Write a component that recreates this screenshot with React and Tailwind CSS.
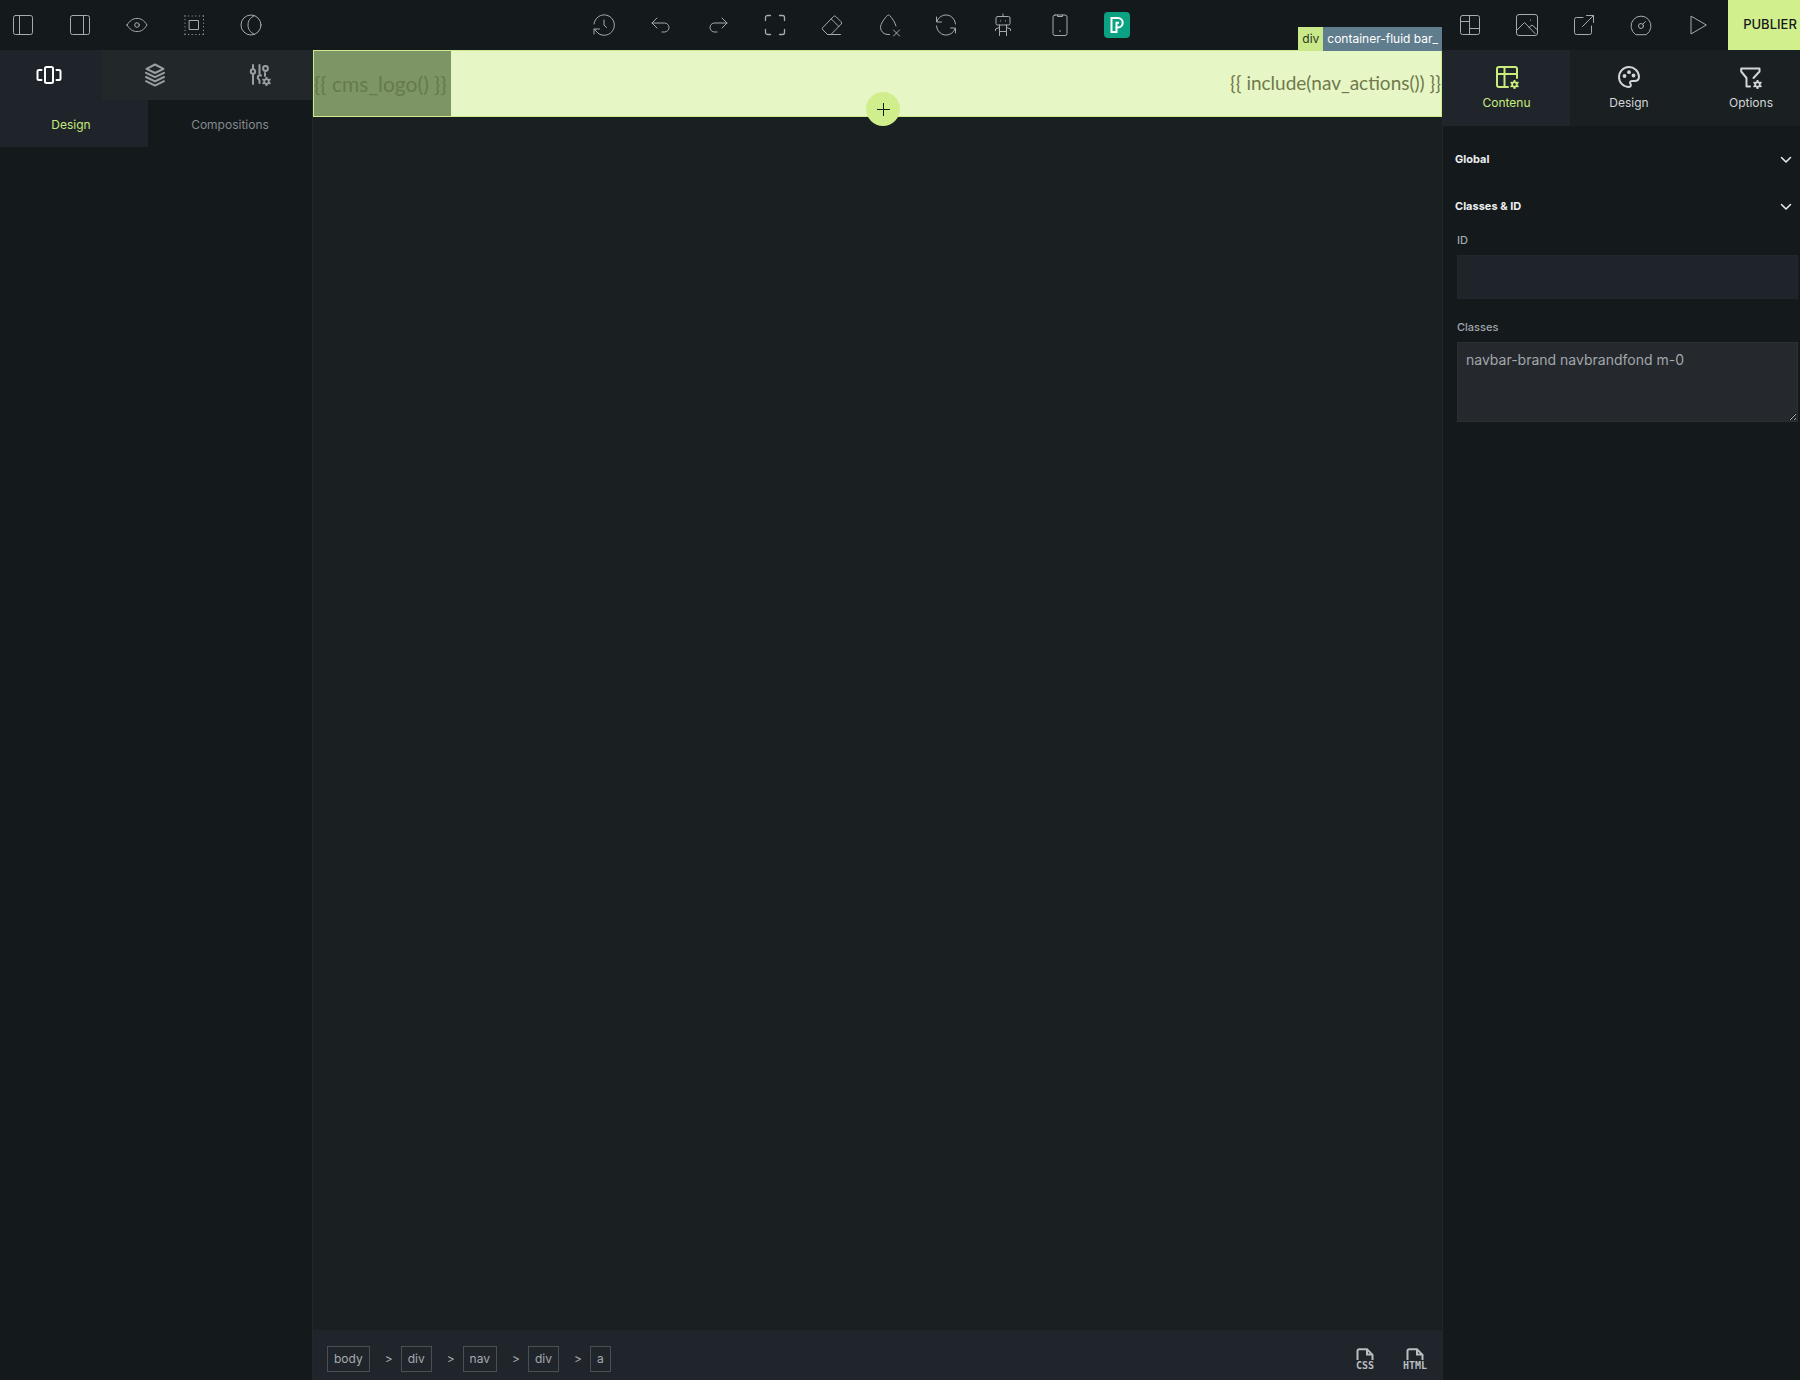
import { useState } from "react";

const Svg = ({ size = 24, width = 1, children }) => (
  <svg
    width={size}
    height={size}
    viewBox={`0 0 ${size} ${size}`}
    fill="none"
    stroke="currentColor"
    strokeWidth={width}
    strokeLinecap="round"
    strokeLinejoin="round"
    aria-hidden="true"
    className="shrink-0"
  >
    {children}
  </svg>
);

// Small cog placed in the corner of the settings icons
const Gear = ({ x, y }) => (
  <g transform={`translate(${x} ${y})`} strokeLinecap="butt">
    <circle r="2.3" strokeWidth="1.8" />
    <path
      strokeWidth="1.9"
      d="M0-2.6V-4.6M0 2.6V4.6M2.3-1.3 4-2.3M2.3 1.3 4 2.3M-2.3-1.3-4-2.3M-2.3 1.3-4 2.3"
    />
  </g>
);

const leftTools = [
  { label: "Panneau gauche", icon: <><rect x="2.5" y="2.5" width="19" height="19" rx="2" /><path d="M8.5 2.5v19" /></> },
  { label: "Panneau droit", icon: <><rect x="2.5" y="2.5" width="19" height="19" rx="2" /><path d="M15.5 2.5v19" /></> },
  { label: "Aperçu", icon: <><path d="M2 12c2.6-4.4 6-6.6 10-6.6s7.4 2.2 10 6.6c-2.6 4.4-6 6.6-10 6.6S4.600 16.400 2 12Z" /><circle cx="12" cy="12" r="2.3" /></> },
  {
    label: "Contours",
    icon: (
      <>
        <rect x="7.5" y="7.5" width="9" height="9" />
        <path strokeDasharray="1 2.6" strokeLinecap="butt" d="M2.5 3h19M2.5 21.5h19M3 2.5v19M21.5 2.5v19" />
      </>
    ),
  },
  { label: "Thème", icon: <><circle cx="12" cy="12" r="10" /><path d="M15.5 2.7C11 4.5 9 8 9 12s2 7.5 6.5 9.3" /></> },
];

const centerTools = [
  { label: "Historique", icon: <path d="M2 11A10.200 10.200 0 1 1 6 20.200L2.200 16M2 21v-5h5.500M12 7v5l2.500 2.500" /> },
  { label: "Annuler", icon: <path d="M8 5 3 10l5 5M3 10h12.500a4.500 4.500 0 0 1 0 9H13" /> },
  { label: "Rétablir", icon: <path d="m16 5 5 5-5 5M21 10H8.500a4.500 4.500 0 0 0 0 9H11" /> },
  { label: "Plein écran", icon: <path strokeWidth="1.3" d="M2.500 7.500v-3a2 2 0 0 1 2-2h3M16.500 2.500h3a2 2 0 0 1 2 2v3M21.500 16.500v3a2 2 0 0 1-2 2h-3M7.500 21.500h-3a2 2 0 0 1-2-2v-3" /> },
  { label: "Gomme", icon: <path d="M7.500 21.500h13M7.500 21.500 2.800 16.800a1.700 1.700 0 0 1 0-2.300L13.500 3.500a1.600 1.600 0 0 1 2.300 0l5.300 5.300a1.600 1.600 0 0 1 0 2.300L11 21.500M11.300 6l7.500 7.500" /> },
  { label: "Effacer le style", icon: <path d="M12.500 21.500h-1.500A7.300 7.300 0 0 1 3.500 14.500C3.500 10.500 8 5 10.300 2.500a1.800 1.800 0 0 1 2.400 0C15 5 18 9 19 13M16.500 17l6 6M22.500 17l-6 6" /> },
  { label: "Actualiser", icon: <path d="M2.500 4v5h5M2.800 8.500A9.600 9.600 0 0 1 21.500 11M21.500 20v-5h-5M21.200 15.500A9.600 9.600 0 0 1 2.500 13" /> },
  {
    label: "Assistant",
    icon: (
      <>
        <rect x="5" y="3.5" width="14" height="8.5" rx="1.5" />
        <path d="M12 1v2.500M9.500 7.800v.2M14.500 7.800v.2M8.500 12v10.500M15.500 12v10.500M8.500 18.500h7M8.500 14.500l-4 1.500v1.500M15.500 14.500l4 1.500v1.500" />
      </>
    ),
  },
  { label: "Mobile", icon: <><rect x="5" y="2" width="14" height="20.5" rx="2" /><path d="M9.500 2v1.500h5V2M12 17.500v1.200" /></> },
];

const rightTools = [
  { label: "Mise en page", icon: <><rect x="2.5" y="2.5" width="19" height="19" rx="2" /><path d="M11.500 2.500v19M2.500 8.500h9M11.500 15.500h10" /></> },
  { label: "Médias", icon: <><rect x="1.5" y="1.5" width="21" height="21" rx="2.5" /><path d="m2 17 7.500-7.500L20 20.500M14 14.500l3-2.500 5.500 5M15.500 7v.3" /></> },
  { label: "Ouvrir", icon: <path d="M11 4.500H4.500a2 2 0 0 0-2 2v13a2 2 0 0 0 2 2h13a2 2 0 0 0 2-2V13M14.500 2.500h7v7M21.500 2.500 10.500 13.500" /> },
  { label: "Performance", icon: <><path d="M6.500 21.500A10 10 0 1 1 17.500 21.500Z" /><circle cx="12" cy="13" r="2.5" /><path d="m13.800 11.200 2.700-2.700" /></> },
  { label: "Lire", icon: <path d="M5 3.500v17.500L20 12.200Z" /> },
];

const panelTabs = [
  {
    name: "Contenu",
    size: "w-[127px]",
    icon: (
      <>
        <path d="M8 22H4a2 2 0 0 1-2-2V4a2 2 0 0 1 2-2h16a2 2 0 0 1 2 2v6.500M2 9h20M9.500 2v20H13M22 10v3" />
        <Gear x={19.5} y={19.5} />
      </>
    ),
  },
  {
    name: "Design",
    size: "w-[118px]",
    icon: (
      <>
        <path d="M12 22a10 10 0 1 1 10-10.500c0 3-2 4.500-4.500 4.500H15c-2 0-2.500 1.500-1.500 3s0 3-1.500 3Z" />
        <g fill="currentColor" stroke="none">
          <circle cx="7.5" cy="11" r="1.9" />
          <circle cx="12" cy="7.2" r="1.9" />
          <circle cx="16.5" cy="10.5" r="1.9" />
        </g>
      </>
    ),
  },
  {
    name: "Options",
    size: "ml-auto w-[98px]",
    icon: (
      <>
        <path d="M11 21.500H7.500V13L2.200 6.500V3.500H20.500v3L14.500 13" />
        <Gear x={18.5} y={19.5} />
      </>
    ),
  },
];

const sideTabs = [
  {
    name: "Composants",
    size: "w-[102px] pr-1",
    icon: (
      <Svg size={26} width={2}>
        <rect x="9" y="5" width="8" height="16" rx="1.5" />
        <path d="M5.500 8H3a1.500 1.500 0 0 0-1.500 1.500v7A1.500 1.500 0 0 0 3 18h2.500M20.500 8H23a1.500 1.500 0 0 1 1.500 1.500v7A1.500 1.500 0 0 1 23 18h-2.500" />
      </Svg>
    ),
  },
  {
    name: "Calques",
    size: "flex-1",
    icon: (
      <Svg size={24} width={2}>
        <path d="m12 1.500 8.500 4.300L12 10 3.500 5.800ZM3 9.800l9 4.400 9-4.400M3 14l9 4.400 9-4.400M3 18.200l9 4.400 9-4.400" />
      </Svg>
    ),
  },
  {
    name: "Réglages",
    size: "flex-1",
    icon: (
      <Svg size={24} width={2}>
        <path d="M5 2v4M5 11v10M11.500 2v9M11.500 17.500V20M17 10v3" />
        <circle cx="5" cy="8.5" r="2.2" />
        <circle cx="17.5" cy="5.5" r="2.4" />
        <path d="M13 12.500a2.200 2.200 0 1 0-2 4" />
        <Gear x={18.5} y={18.5} />
      </Svg>
    ),
  },
];

const crumbs = ["body", "div", "nav", "div", "a"];

function ToolGroup({ tools, children }) {
  return (
    <div className="flex items-center gap-[11px]">
      {tools.map(({ label, icon }) => (
        <button key={label} aria-label={label} className="flex h-[50px] w-[46px] items-center justify-center">
          <Svg>{icon}</Svg>
        </button>
      ))}
      {children}
    </div>
  );
}

function TopBar() {
  return (
    <header className="flex h-[50px] items-center justify-between bg-[#14191c] text-[#a7abae]">
      <ToolGroup tools={leftTools} />
      <ToolGroup tools={centerTools}>
        <button aria-label="Pages" className="flex w-[46px] justify-center">
          <span className="flex size-[26px] items-center justify-center rounded bg-[#0aa283] text-white">
            <Svg size={20} width={2}>
              <path strokeLinejoin="miter" d="M4.500 3H11a4.700 4.700 0 0 1 0 9.400H9.500V17h-5Z" />
              <path strokeLinejoin="miter" strokeLinecap="butt" d="M9.500 13V7.700H12" />
            </Svg>
          </span>
        </button>
      </ToolGroup>
      <div className="flex gap-[7px]">
        <ToolGroup tools={rightTools} />
        <button className="w-[72px] bg-[#d2ef8e] pl-3 text-[13px] font-medium text-[#14191c]">PUBLIER</button>
      </div>
    </header>
  );
}

function LeftPanel() {
  const [view, setView] = useState("Design");

  return (
    <aside className="w-[312px] shrink-0 bg-[#14191c]">
      <div className="flex h-[50px]">
        {sideTabs.map(({ name, size, icon }, i) => (
          <button
            key={name}
            aria-label={name}
            className={`flex items-center justify-center ${size} ${i === 0 ? "bg-[#1f242b] text-white" : "bg-[#222729] text-[#9a9fa3]"}`}
          >
            {icon}
          </button>
        ))}
      </div>
      <div className="flex h-[47px] text-xs">
        <button
          onClick={() => setView("Design")}
          className={`w-[148px] pt-0.5 pr-1.5 ${view === "Design" ? "bg-[#1f242b] text-[#c5ea78]" : "text-[#85898d]"}`}
        >
          Design
        </button>
        <button
          onClick={() => setView("Compositions")}
          className={`flex-1 pt-0.5 ${view === "Compositions" ? "bg-[#1f242b] text-[#c5ea78]" : "text-[#85898d]"}`}
        >
          Compositions
        </button>
      </div>
    </aside>
  );
}

function FileButton({ type }) {
  return (
    <button aria-label={type} className="flex w-6 flex-col items-center text-[#b9bec2]">
      <svg width="18" height="13" viewBox="0 0 18 13" fill="none" stroke="currentColor" strokeWidth="2" aria-hidden="true">
        <path d="M1.500 12V3A1.700 1.700 0 0 1 3.200 1.300H11L16.500 6.800V12" />
        <path d="M11 1.500v5h5" />
      </svg>
      <span className="font-['DejaVu_Sans_Mono',monospace] text-[10px] leading-[10px] font-bold">{type}</span>
    </button>
  );
}

function Canvas() {
  return (
    <main className="flex min-w-0 flex-1 flex-col border-x border-[#20282a] bg-[#1a1f22]">
      <div className="relative flex h-[67px] items-stretch justify-between border border-[#cdea8c] bg-[#e7f6c5] font-[Lato,sans-serif] text-[#6f7a4d]">
        <div className="flex w-[137px] items-center bg-[#7d9565] text-[21px] whitespace-nowrap text-[#677a48]">
          {"{{ cms_logo() }}"}
        </div>
        <div className="flex items-center text-[19px]">{"{{ include(nav_actions()) }}"}</div>

        <div className="absolute -top-6 -right-px flex h-6 items-center font-[Inter,sans-serif] text-xs">
          <span className="flex h-6 items-center bg-[#c9e98b] px-1 text-[#2c3521]">div</span>
          <span className="flex h-6 items-center bg-[#5f7d8d] px-1 text-white">container-fluid bar_</span>
        </div>

        <button
          aria-label="Ajouter"
          className="absolute -bottom-[10px] left-1/2 -ml-3 flex size-[34px] items-center justify-center rounded-full bg-[#d0ee8b] text-[#14191c]"
        >
          <Svg size={14}>
            <path strokeLinecap="butt" d="M7.500 1v13M1 7.500h13" />
          </Svg>
        </button>
      </div>

      <div className="flex-1" />

      <footer className="flex h-[50px] items-center justify-between bg-[#20252b] pt-2 pr-[15px] pl-[14px] text-xs text-[#a5aaae]">
        <nav className="flex items-center gap-2">
          {crumbs.map((crumb, i) => (
            <div key={i} className="flex items-center gap-2">
              {i > 0 && <span className="pl-[7px]">&gt;</span>}
              <a href="#" className="flex h-[26px] items-center border border-[#495054] px-1.5">{crumb}</a>
            </div>
          ))}
        </nav>
        <div className="flex gap-[26px]">
          <FileButton type="CSS" />
          <FileButton type="HTML" />
        </div>
      </footer>
    </main>
  );
}

function Section({ title }) {
  return (
    <button className="flex h-[47px] w-full items-center justify-between pr-2 pl-3 text-[11px] font-bold text-[#eceeef]">
      {title}
      <Svg size={12} width={1.5}>
        <path d="m1.500 3.500 4.500 4.500 4.500-4.500" />
      </Svg>
    </button>
  );
}

function RightPanel() {
  const [tab, setTab] = useState("Contenu");

  return (
    <aside className="w-[357px] shrink-0 bg-[#14191c]">
      <div className="flex h-[76px] bg-[#1a1f22] text-xs">
        {panelTabs.map(({ name, size, icon }) => (
          <button
            key={name}
            onClick={() => setTab(name)}
            className={`flex flex-col items-center gap-1.5 pt-[15px] ${size} ${tab === name ? "bg-[#20252b] text-[#c9ec7c]" : "text-[#d3d5d7]"}`}
          >
            <Svg width={2}>{icon}</Svg>
            {name}
          </button>
        ))}
      </div>

      <div className="pt-[10px]">
        <Section title="Global" />
        <Section title="Classes & ID" />
        <form className="flex flex-col pr-0.5 pl-[14px] text-[11px] font-medium text-[#a2a7ab]">
          <label htmlFor="el-id" className="mt-0.5 leading-4">ID</label>
          <input
            id="el-id"
            className="mt-[7px] h-11 w-full border border-[#22272d] bg-[#1f242a] px-2 text-sm font-normal outline-none"
          />
          <label htmlFor="el-classes" className="mt-5 leading-4">Classes</label>
          <textarea
            id="el-classes"
            defaultValue="navbar-brand navbrandfond m-0"
            className="mt-[7px] block h-20 w-full resize-y border border-[#2a2f34] bg-[#25292e] px-2 py-[7px] text-sm font-normal outline-none"
          />
        </form>
      </div>
    </aside>
  );
}

export default function App() {
  return (
    <div className="flex min-h-screen flex-col bg-[#14191c] font-[Inter,sans-serif]">
      <TopBar />
      <div className="flex flex-1">
        <LeftPanel />
        <Canvas />
        <RightPanel />
      </div>
    </div>
  );
}
